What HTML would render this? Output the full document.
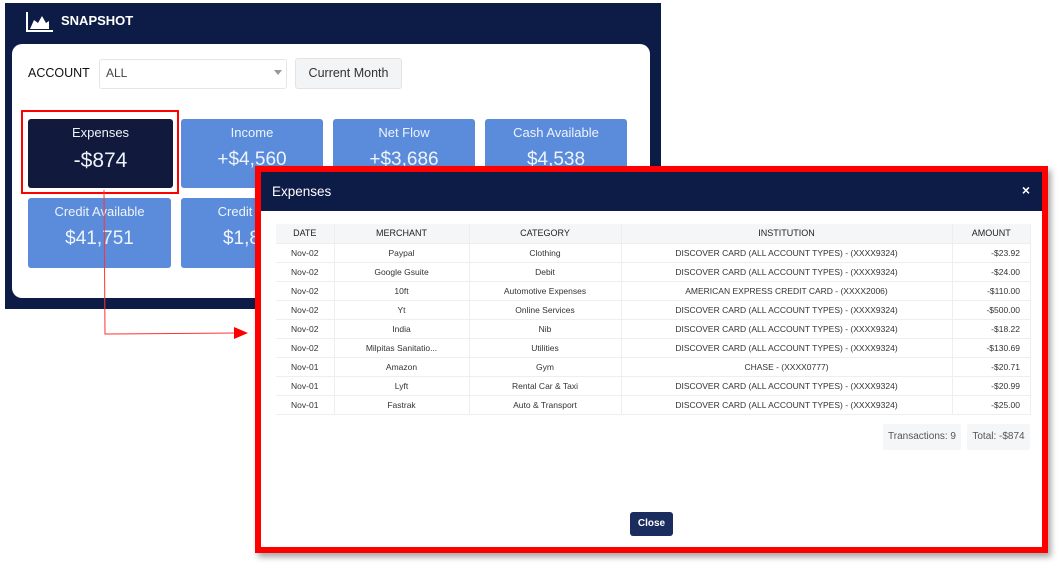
<!DOCTYPE html>
<html><head><meta charset="utf-8"><style>
*{box-sizing:border-box;margin:0;padding:0}
body{width:1063px;height:572px;background:#fff;position:relative;overflow:hidden;font-family:"Liberation Sans",sans-serif}
.abs{position:absolute}
.dark{left:5px;top:3px;width:656px;height:306px;background:#0d1b47}
.inner{left:12px;top:44px;width:638px;height:254px;background:#fff;border-radius:10px}
.card{position:absolute;background:#5b8cdc;color:#eef3fb;text-align:center;border-radius:3px}
.card .t{font-size:13px;margin-top:6px}
.card .v{font-size:19px;margin-top:9px}
.modal{left:255px;top:166px;width:793px;height:387px;border:6px solid #f00;background:#fff;box-shadow:3px 4px 6px rgba(0,0,0,.35)}
table{border-collapse:collapse;font-size:8.5px;color:#333}
td,th{height:19px;text-align:center;border-right:1px solid #eee;border-bottom:1px solid #eee;padding:0}
th{font-weight:normal;font-size:9px;color:#222;height:19px}
tr.h{background:#f4f6f8}
td.a{text-align:right;padding-right:10px}
.box{position:absolute;background:#f4f6f8;font-size:10px;color:#555;text-align:center;line-height:26px;border-radius:2px}
</style></head><body>
<div class="abs dark"></div>
<svg class="abs" style="left:25px;top:11px" width="30" height="22" viewBox="0 0 30 22"><path d="M2 1V20H28" stroke="#fff" stroke-width="2" fill="none"/><path d="M5 18L9 9L13 12L17 5L21 12L24 10V18Z" fill="#fff"/></svg>
<div class="abs" style="left:61px;top:13px;color:#fff;font-weight:bold;font-size:13px">SNAPSHOT</div>
<div class="abs inner"></div>
<div class="abs" style="left:28px;top:66px;font-size:12.5px;color:#111">ACCOUNT</div>
<div class="abs" style="left:99px;top:59px;width:188px;height:30px;border:1px solid #e6e6e6;border-radius:3px;font-size:12px;color:#444;padding:6px 6px">ALL<span style="position:absolute;right:4px;top:10px;border:4px solid transparent;border-top:5px solid #999"></span></div>
<div class="abs" style="left:295px;top:58px;width:107px;height:31px;background:#f3f4f6;border:1px solid #e3e3e3;border-radius:3px;font-size:12.5px;color:#333;text-align:center;line-height:29px">Current Month</div>
<div class="abs" style="left:21px;top:110px;width:158px;height:84px;border:2px solid #f00"></div>
<div class="card" style="left:28px;top:119px;width:145px;height:69px;background:#111a3c"><div class="t">Expenses</div><div class="v" style="font-size:21px">-$874</div></div>
<div class="card" style="left:181px;top:119px;width:142px;height:69px"><div class="t">Income</div><div class="v">+$4,560</div></div>
<div class="card" style="left:333px;top:119px;width:142px;height:69px"><div class="t">Net Flow</div><div class="v">+$3,686</div></div>
<div class="card" style="left:485px;top:119px;width:142px;height:69px"><div class="t">Cash Available</div><div class="v">$4,538</div></div>
<div class="card" style="left:28px;top:198px;width:143px;height:70px"><div class="t">Credit Available</div><div class="v">$41,751</div></div>
<div class="card" style="left:181px;top:198px;width:142px;height:70px"><div class="t">Credit Used</div><div class="v">$1,800</div></div>
<svg class="abs" style="left:0;top:0" width="260" height="360"><path d="M104 190L105 334L236 333" stroke="#f33" stroke-width="1" fill="none"/><path d="M234 327L248 333L234 339Z" fill="#f00"/></svg>
<div class="abs modal">
<div style="height:39px;background:#0d1b47;color:#fff;font-size:13.5px;padding:12px 0 0 11px;position:relative">Expenses<span style="position:absolute;right:12px;top:10px;font-weight:bold;font-size:14px">×</span></div>
<table style="position:absolute;left:15px;top:52px;width:755px">
<tr class="h"><th style="width:58px">DATE</th><th style="width:135px">MERCHANT</th><th style="width:152px">CATEGORY</th><th style="width:331px">INSTITUTION</th><th>AMOUNT</th></tr>
<tr><td>Nov-02</td><td>Paypal</td><td>Clothing</td><td>DISCOVER CARD (ALL ACCOUNT TYPES) - (XXXX9324)</td><td class="a">-$23.92</td></tr>
<tr><td>Nov-02</td><td>Google Gsuite</td><td>Debit</td><td>DISCOVER CARD (ALL ACCOUNT TYPES) - (XXXX9324)</td><td class="a">-$24.00</td></tr>
<tr><td>Nov-02</td><td>10ft</td><td>Automotive Expenses</td><td>AMERICAN EXPRESS CREDIT CARD - (XXXX2006)</td><td class="a">-$110.00</td></tr>
<tr><td>Nov-02</td><td>Yt</td><td>Online Services</td><td>DISCOVER CARD (ALL ACCOUNT TYPES) - (XXXX9324)</td><td class="a">-$500.00</td></tr>
<tr><td>Nov-02</td><td>India</td><td>Nib</td><td>DISCOVER CARD (ALL ACCOUNT TYPES) - (XXXX9324)</td><td class="a">-$18.22</td></tr>
<tr><td>Nov-02</td><td>Milpitas Sanitatio...</td><td>Utilities</td><td>DISCOVER CARD (ALL ACCOUNT TYPES) - (XXXX9324)</td><td class="a">-$130.69</td></tr>
<tr><td>Nov-01</td><td>Amazon</td><td>Gym</td><td>CHASE - (XXXX0777)</td><td class="a">-$20.71</td></tr>
<tr><td>Nov-01</td><td>Lyft</td><td>Rental Car &amp; Taxi</td><td>DISCOVER CARD (ALL ACCOUNT TYPES) - (XXXX9324)</td><td class="a">-$20.99</td></tr>
<tr><td>Nov-01</td><td>Fastrak</td><td>Auto &amp; Transport</td><td>DISCOVER CARD (ALL ACCOUNT TYPES) - (XXXX9324)</td><td class="a">-$25.00</td></tr>
</table>
<div class="box" style="left:622px;top:252px;width:78px">Transactions: 9</div>
<div class="box" style="left:706px;top:252px;width:63px">Total: -$874</div>
<div class="abs" style="left:369px;top:340px;width:43px;height:24px;background:#1a2d5e;border-radius:3px;color:#fff;font-size:10px;font-weight:bold;text-align:center;line-height:24px">Close</div>
</div>
</body></html>
